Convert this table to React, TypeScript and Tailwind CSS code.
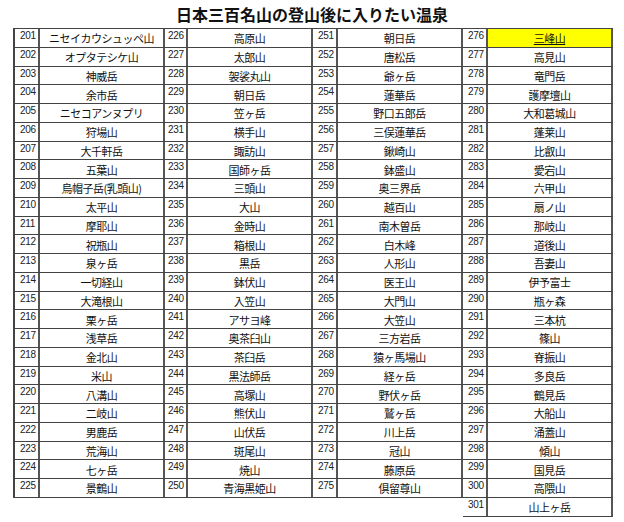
const blocks: string[][] = [
  [
    "ニセイカウシュッペ山", "オプタテシケ山", "神威岳", "余市岳", "ニセコアンヌプリ",
    "狩場山", "大千軒岳", "五葉山", "烏帽子岳(乳頭山)", "太平山",
    "摩耶山", "祝瓶山", "泉ヶ岳", "一切経山", "大滝根山",
    "栗ヶ岳", "浅草岳", "金北山", "米山", "八溝山",
    "二岐山", "男鹿岳", "荒海山", "七ヶ岳", "景鶴山",
  ],
  [
    "高原山", "太郎山", "袈裟丸山", "朝日岳", "笠ヶ岳",
    "横手山", "諏訪山", "国師ヶ岳", "三頭山", "大山",
    "金時山", "箱根山", "黒岳", "鉢伏山", "入笠山",
    "アサヨ峰", "奥茶臼山", "茶臼岳", "黒法師岳", "高塚山",
    "熊伏山", "山伏岳", "斑尾山", "焼山", "青海黒姫山",
  ],
  [
    "朝日岳", "唐松岳", "爺ヶ岳", "蓮華岳", "野口五郎岳",
    "三俣蓮華岳", "鍬崎山", "鉢盛山", "奥三界岳", "越百山",
    "南木曽岳", "白木峰", "人形山", "医王山", "大門山",
    "大笠山", "三方岩岳", "猿ヶ馬場山", "経ヶ岳", "野伏ヶ岳",
    "鷲ヶ岳", "川上岳", "冠山", "藤原岳", "倶留尊山",
  ],
  [
    "三峰山", "高見山", "竜門岳", "護摩壇山", "大和葛城山",
    "蓬莱山", "比叡山", "愛宕山", "六甲山", "扇ノ山",
    "那岐山", "道後山", "吾妻山", "伊予富士", "瓶ヶ森",
    "三本杭", "篠山", "脊振山", "多良岳", "鶴見岳",
    "大船山", "涌蓋山", "傾山", "国見岳", "高隈山",
    "山上ヶ岳",
  ],
];

const starts = [201, 226, 251, 276];

export default function App() {
  return (
    <div className="w-[624px] h-[522px] bg-white text-black font-['Noto_Sans_CJK_JP',sans-serif]">
      <h1 className="h-[28px] flex items-center justify-center text-[16px] font-bold text-[#111] leading-none pb-[1px]">
        日本三百名山の登山後に入りたい温泉
      </h1>
      <div className="flex items-start pl-[13px]">
        {blocks.map((names, b) => (
          <div
            key={b}
            className={`w-[150px] border-t border-[#444] ${b === 0 ? "border-l-2" : ""}`}
          >
            {names.map((name, i) => {
              const highlight = b === 3 && i === 0;
              return (
                <div
                  key={i}
                  className="grid grid-cols-[25px_125px] h-[18.75px] border-b border-[#444]"
                >
                  <div className="border-r-2 border-[#555] pl-[5px] pt-[1px] text-[10px] leading-[12px] text-[#222] font-['Liberation_Sans',sans-serif] tracking-[-0.3px]">
                    {starts[b] + i}
                  </div>
                  <div
                    className={`border-r-2 border-[#555] flex items-center justify-center pt-[2px] text-[11px] leading-none tracking-[-0.5px] text-[#111] whitespace-nowrap ${
                      highlight ? "bg-[#ffff00] underline" : ""
                    }`}
                  >
                    {name}
                  </div>
                </div>
              );
            })}
          </div>
        ))}
      </div>
    </div>
  );
}
